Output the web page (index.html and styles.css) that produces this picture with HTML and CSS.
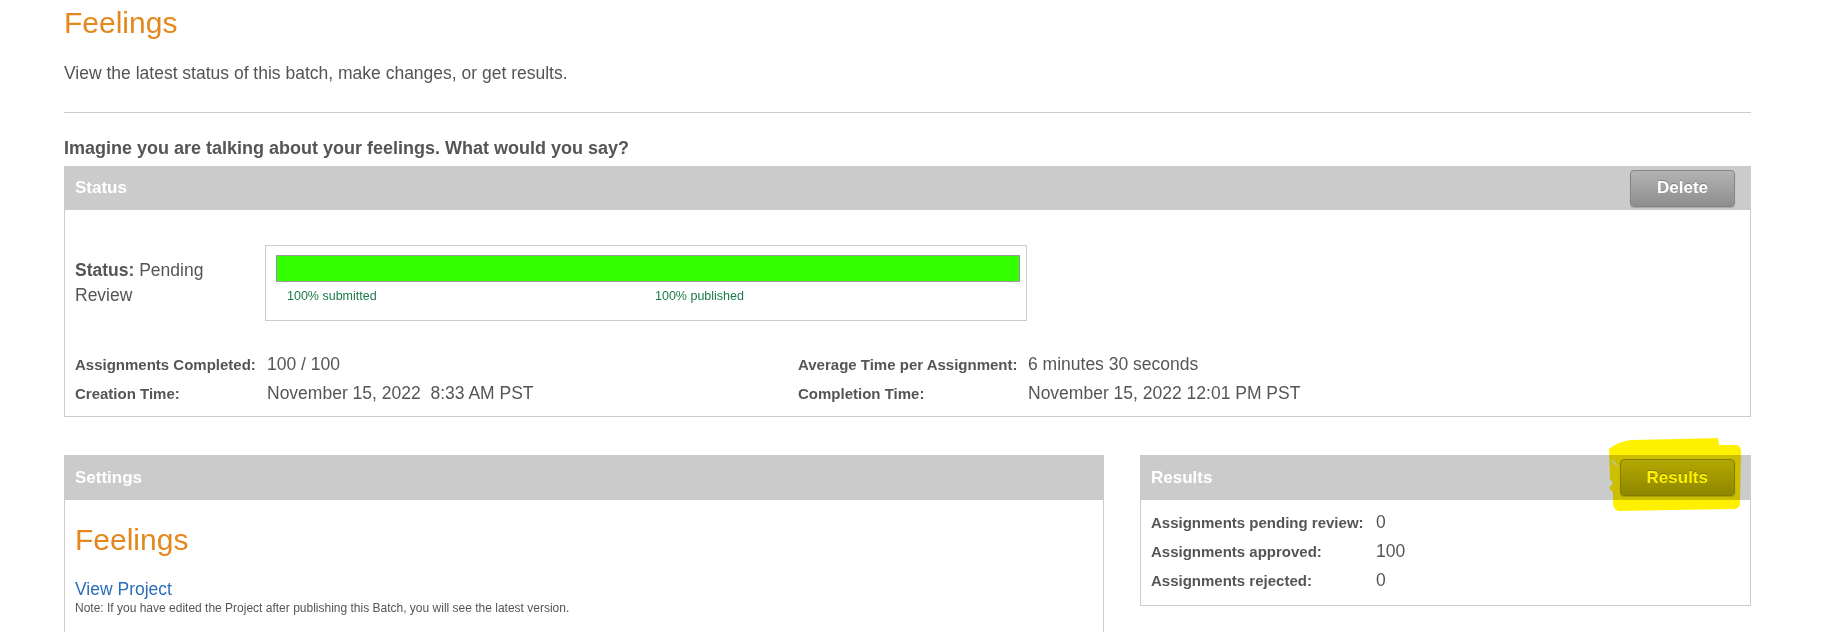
FILE: index.html
```html
<!DOCTYPE html>
<html lang="en">
<head>
<meta charset="utf-8">
<title>Feelings</title>
<link rel="stylesheet" href="styles.css">
</head>
<body>
<div class="page">
  <h1 class="title">Feelings</h1>
  <p class="lead">View the latest status of this batch, make changes, or get results.</p>
  <hr class="rule">
  <h2 class="batch-q">Imagine you are talking about your feelings. What would you say?</h2>

  <section class="panel">
    <div class="panel-head">
      <span class="panel-title">Status</span>
      <button class="btn">Delete</button>
    </div>
    <div class="status-body">
      <div class="status-row">
        <div class="status-text"><b>Status:</b> <span>Pending</span> <span>Review</span></div>
        <div class="progress">
          <div class="bar"></div>
          <div class="bar-labels"><span>100% submitted</span><span>100% published</span></div>
        </div>
      </div>
      <div class="stats">
        <span class="lbl">Assignments Completed:</span><span class="val">100 / 100</span>
        <span class="lbl">Average Time per Assignment:</span><span class="val">6 minutes 30 seconds</span>
        <span class="lbl">Creation Time:</span><span class="val">November 15, 2022&nbsp; 8:33 AM PST</span>
        <span class="lbl">Completion Time:</span><span class="val">November 15, 2022 12:01 PM PST</span>
      </div>
    </div>
  </section>

  <div class="lower">
    <section class="panel settings">
      <div class="panel-head">
        <span class="panel-title">Settings</span>
      </div>
      <div class="settings-body">
        <div class="proj-name">Feelings</div>
        <a class="proj-link" href="#">View Project</a>
        <div class="note">Note: If you have edited the Project after publishing this Batch, you will see the latest version.</div>
      </div>
    </section>

    <section class="panel results">
      <div class="panel-head">
        <span class="panel-title">Results</span>
        <span class="hl-wrap">
          <button class="btn">Results</button>
          <svg class="hl" width="133" height="76" viewBox="0 0 133 76" aria-hidden="true">
            <path d="M0,13 C6,8 14,5 22,4 L70,3 L109,2 L110,9 L128,9 C131,10 132,13 132,16 L131,67 C131,71 128,73 124,73 L62,74 L9,75 C6,74 4,71 4,67 L4,56 L0,52 L4,47 L1,43 Z" fill="#fff000"/>
            <path d="M3,24 L8,30" stroke="#f4f4f4" stroke-width="1.2"/>
          </svg>
        </span>
      </div>
      <div class="results-body">
        <span class="lbl">Assignments pending review:</span><span class="val">0</span>
        <span class="lbl">Assignments approved:</span><span class="val">100</span>
        <span class="lbl">Assignments rejected:</span><span class="val">0</span>
      </div>
    </section>
  </div>
</div>
</body>
</html>
```

FILE: styles.css
```css
* { box-sizing: border-box; }

html, body {
  margin: 0;
  padding: 0;
  background: #fff;
}

body {
  font-family: "Liberation Sans", Arial, sans-serif;
  color: #555;
  font-size: 17.5px;
}

.page {
  width: 1751px;
  padding: 6px 0 0 64px;
}

.title {
  margin: 0;
  font-size: 30px;
  line-height: 34px;
  font-weight: normal;
  color: #e4871c;
}

.lead {
  margin: 23px 0 0;
  font-size: 17.5px;
  line-height: 20px;
  color: #555;
}

.rule {
  margin: 29px 0 0;
  border: 0;
  border-top: 1px solid #ccc;
  height: 0;
}

.batch-q {
  margin: 25px 0 0;
  font-size: 18px;
  line-height: 21px;
  font-weight: bold;
  color: #555;
}

.panel {
  margin-top: 7px;
  border: 1px solid #ccc;
  border-top: 0;
  background: #fff;
}

.panel-head {
  display: flex;
  align-items: center;
  justify-content: space-between;
  height: 44px;
  background: #cbcbcb;
  padding: 0 15px 0 10px;
}

.panel-title {
  color: #fff;
  font-weight: bold;
  font-size: 17px;
}

.btn {
  font-family: "Liberation Sans", Arial, sans-serif;
  font-size: 17px;
  font-weight: bold;
  color: #fff;
  text-shadow: 0 -1px 0 rgba(60, 70, 90, 0.35);
  height: 37px;
  padding: 0 26px;
  border: 1px solid #858585;
  border-radius: 4px;
  background: linear-gradient(#b3b3b3, #8e8e8e);
  box-shadow: 0 1px 1px rgba(0, 0, 0, 0.18);
  cursor: pointer;
}

.status-body {
  padding: 35px 10px 8px;
}

.status-row {
  display: grid;
  grid-template-columns: 190px 762px;
  align-items: center;
}

.status-text {
  width: 160px;
  font-size: 17.5px;
  line-height: 25px;
  color: #555;
}

.status-text b {
  color: #555;
}

.progress {
  border: 1px solid #ccc;
  padding: 9px 6px 16px 10px;
}

.bar {
  height: 27px;
  background: #33ff00;
  border: 1px solid #999;
}

.bar-labels {
  display: grid;
  grid-template-columns: 368px 1fr;
  padding-left: 11px;
  margin-top: 7px;
  font-size: 12.5px;
  line-height: 15px;
  color: #1b7a4a;
}

.stats {
  display: grid;
  grid-template-columns: 192px 531px 230px 1fr;
  align-items: baseline;
  margin-top: 29px;
  line-height: 29px;
}

.lbl {
  font-size: 15px;
  font-weight: bold;
  color: #555;
}

.val {
  font-size: 17.5px;
  color: #555;
}

.lower {
  display: flex;
  align-items: flex-start;
  gap: 36px;
  margin-top: 38px;
}

.lower .panel {
  margin-top: 0;
}

.settings {
  width: 1040px;
}

.settings .panel-head {
  height: 45px;
}

.settings-body {
  padding: 23px 10px 60px;
}

.proj-name {
  font-size: 30px;
  line-height: 34px;
  color: #e4871c;
}

.proj-link {
  display: block;
  margin-top: 22px;
  font-size: 17.5px;
  line-height: 20px;
  color: #2a6ebb;
  text-decoration: none;
}

.note {
  margin-top: 2px;
  font-size: 12px;
  line-height: 14px;
  color: #555;
}

.results {
  width: 611px;
}

.results .panel-head {
  height: 45px;
  padding-right: 15px;
}

.hl-wrap {
  position: relative;
  display: inline-flex;
}

.hl {
  position: absolute;
  left: -11px;
  top: -23px;
  mix-blend-mode: multiply;
  pointer-events: none;
}

.results-body {
  display: grid;
  grid-template-columns: 225px 1fr;
  align-items: baseline;
  padding: 8px 10px 10px;
  line-height: 28px;
}
```
